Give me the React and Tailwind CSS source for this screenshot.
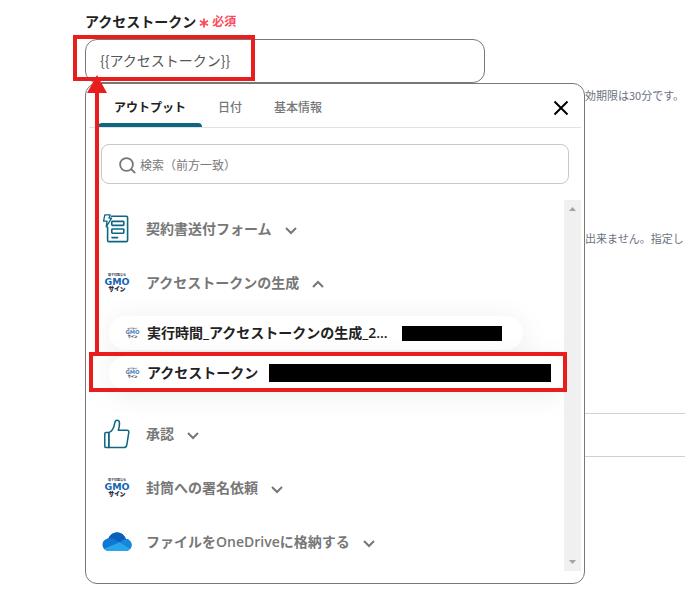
import React, { useState } from "react";

const FormIcon = () => (
  <svg viewBox="0 0 30 30" className="w-[30px] h-[30px]" fill="none" stroke="#0d6783" strokeWidth="1.6">
    <path d="M9.600 2.200h14.600c.9 0 1.400.5 1.400 1.400v22.600c0 .9-.5 1.400-1.400 1.400H7c-.9 0-1.400-.5-1.400-1.400V13" strokeLinecap="round" />
    <rect x="9.800" y="7.400" width="12" height="4" rx=".6" />
    <rect x="9.800" y="15" width="12" height="4.200" rx=".6" />
    <path d="M10 23.600h5.600" strokeLinecap="round" />
    <path d="M2.800.8h5.400L7 4.200h2.600L4.200 12.800 5 7.200H1.600z" strokeWidth="1.300" strokeLinejoin="round" fill="#fff" />
  </svg>
);

const ThumbIcon = () => (
  <svg viewBox="0 0 30 30" className="w-[30px] h-[30px]" fill="none" stroke="#0d6783" strokeWidth="1.5" strokeLinejoin="round">
    <path d="M6.800 13.400H4c-.8 0-1.200.4-1.200 1.200v12.800c0 .8.400 1.200 1.200 1.200h2.800z" />
    <path d="M6.800 13.600c3.200-1.200 5.200-5 6-9.800.3-1.800 1-2.600 2.200-2.600 1.600 0 2.500 1.200 2.500 3.200 0 2.200-.5 4.600-1.200 6.800H25c1.300 0 2 .9 1.800 2.100l-2 12.600c-.2 1.700-1.200 2.700-2.800 2.700H6.800z" />
  </svg>
);

const GmoIcon = ({ className }) => (
  <svg viewBox="0 0 300 200" className={className}>
    <text x="150" y="34" textAnchor="middle" fontSize="30" fontWeight="700" fill="#2b3242" fontFamily="'Noto Sans CJK JP', sans-serif">
      電子印鑑なら
    </text>
    <text x="150" y="120" textAnchor="middle" fontSize="94" fontWeight="700" fill="#1464b4" fontFamily="'DejaVu Sans', sans-serif">
      GMO
    </text>
    <text x="150" y="184" textAnchor="middle" fontSize="56" fontWeight="900" fill="#1c2335" stroke="#1c2335" strokeWidth="2" fontFamily="'Noto Sans CJK JP', sans-serif">
      サイン
    </text>
  </svg>
);

const OneDriveIcon = () => (
  <svg viewBox="0 0 30 20" className="w-[30px] h-5">
    <clipPath id="cloud">
      <path d="M7.500 19C3.400 19 .5 16.300.5 12.800c0-3.300 2.500-5.900 5.900-6.200C7.900 2.900 11.200.6 15 .6c4.200 0 7.700 2.700 8.900 6.500 3.200.3 5.700 2.800 5.700 5.900 0 3.400-2.700 6-6.200 6z" />
    </clipPath>
    <g clipPath="url(#cloud)">
      <rect width="30" height="20" fill="#0f78d4" />
      <path d="M5 0h22v8l-9 2.600L11 6.400 5 6.800z" fill="#0a61b9" />
      <path d="M17.500 10.600 24 6l7 2v9z" fill="#1488dc" />
      <path d="M1.500 17 17.500 10.300 29 17v3H1z" fill="#28a5ea" />
    </g>
  </svg>
);

const Chevron = ({ open }) => (
  <svg viewBox="0 0 12 12" className={open ? "w-3 h-3 mt-1 rotate-180" : "w-3 h-3 mt-[2px]"} fill="none" stroke="#777" strokeWidth="2">
    <path d="M1 4l5 5 5-5" />
  </svg>
);

const tabs = ["アウトプット", "日付", "基本情報"];

const outputs = [
  { name: "契約書送付フォーム", icon: <FormIcon /> },
  {
    name: "アクセストークンの生成",
    icon: <GmoIcon className="w-[30px] h-5" />,
    children: [
      { name: "実行時間_アクセストークンの生成_2...", text: "w-[241px]", pill: "pr-[21px] gap-[14px]", value: "w-[100px] h-[15px]" },
      { name: "アクセストークン", text: "", pill: "pr-[14px] gap-[11px]", value: "w-[282px] h-[18px]" },
    ],
  },
  { name: "承認", icon: <ThumbIcon /> },
  { name: "封筒への署名依頼", icon: <GmoIcon className="w-[30px] h-5" /> },
  { name: "ファイルをOneDriveに格納する", icon: <OneDriveIcon /> },
];

const OutputItem = ({ item }) => (
  <li>
    <button type="button" className="flex items-center h-[54px] pl-[13px] text-sm font-semibold text-[#777]">
      {item.icon}
      <span className="ml-[14px] mr-[13px]">{item.name}</span>
      <Chevron open={!!item.children} />
    </button>
    {item.children && (
      <ul className="flex flex-col items-start gap-[6px] pt-[6px] pb-[17px] pl-5">
        {item.children.map((child) => (
          <li key={child.name}>
            <button
              type="button"
              className={`flex items-center h-[34px] pl-[15px] rounded-full bg-white text-sm font-semibold text-[#222] shadow-[0_4px_30px_rgba(0,0,0,0.08)] ${child.pill}`}
            >
              <span className="flex items-center gap-[6px]">
                <GmoIcon className="w-[17px] h-3 opacity-80" />
                <span className={`whitespace-nowrap text-left ${child.text}`}>{child.name}</span>
              </span>
              <span className={`bg-black ${child.value}`} />
            </button>
          </li>
        ))}
      </ul>
    )}
  </li>
);

const OutputPicker = () => {
  const [active, setActive] = useState(tabs[0]);

  return (
    <div className="absolute top-full left-0 z-10 w-[500px] p-[3px] pb-3 bg-white border border-[#777] rounded-xl">
      {/* Tabs */}
      <div className="flex items-center justify-between h-[41px] pl-[9px] pr-3 border-b border-[#e2e2e2]">
        <div className="flex h-10 text-xs">
          {tabs.map((tab) => (
            <button
              key={tab}
              type="button"
              onClick={() => setActive(tab)}
              className={`relative px-4 ${active === tab ? "font-bold text-[#222]" : "font-medium text-[#777]"}`}
            >
              {tab}
              {active === tab && <span className="absolute left-0 bottom-0 w-full h-1 bg-[#0d6783] rounded-t-sm" />}
            </button>
          ))}
        </div>
        <button type="button" aria-label="閉じる" className="pt-[2px]">
          <svg viewBox="0 0 16 16" className="w-4 h-4" stroke="#000" strokeWidth="2">
            <path d="M1.500 1.500l13 13M14.500 1.500l-13 13" />
          </svg>
        </button>
      </div>

      {/* Search */}
      <label className="flex items-center gap-1 h-10 mt-4 mx-3 pt-[2px] pl-[17px] border border-[#c8c8c8] rounded-lg">
        <svg viewBox="0 0 17 17" className="w-[17px] h-[17px]" fill="none" stroke="#777" strokeWidth="1.8">
          <circle cx="7.500" cy="7.500" r="6.400" />
          <path d="M12 12l4.200 4.200" />
        </svg>
        <input
          type="text"
          placeholder="検索（前方一致）"
          className="flex-1 text-xs outline-none placeholder:text-[#777]"
        />
      </label>

      {/* Output list */}
      <div className="flex mt-4 font-['Open_Sans','Noto_Sans_CJK_JP',sans-serif]">
        <ul className="flex-1 min-w-0 pt-[2px] pb-[2px] overflow-hidden">
          {outputs.map((item) => (
            <OutputItem key={item.name} item={item} />
          ))}
        </ul>
        <div className="flex flex-col items-center justify-between w-[17px] py-[7px] bg-[#f0f0f0]">
          <svg viewBox="0 0 7 4" className="w-[7px] h-1" fill="#a3a3a3">
            <path d="M0 4l3.500-4L7 4z" />
          </svg>
          <svg viewBox="0 0 7 4" className="w-[7px] h-1" fill="#a3a3a3">
            <path d="M0 0l3.500 4L7 0z" />
          </svg>
        </div>
      </div>
    </div>
  );
};

const App = () => {
  return (
    <div className="relative min-h-screen pt-[11px] pl-[85px] overflow-hidden bg-white font-['Noto_Sans_CJK_JP',sans-serif]">
      <div className="flex items-center gap-[2px] h-5 mb-2">
        <label htmlFor="token" className="text-sm font-bold text-[#222]">
          アクセストークン
        </label>
        <span className="flex items-center gap-[2px] text-xs font-bold text-[#fb4b5c]">
          <svg viewBox="0 0 12 12" className="w-3 h-3 mt-1" stroke="currentColor" strokeWidth="1.8">
            <path d="M6 1.500v9M2 3.800l8 4.400M10 3.800L2 8.200" />
          </svg>
          <span>必須</span>
        </span>
      </div>

      <div className="relative">
        <input
          id="token"
          type="text"
          defaultValue="{{アクセストークン}}"
          className="block w-[400px] h-11 px-[14px] pb-[2px] border border-[#777] rounded-xl text-sm text-[#555] outline-none"
        />
        <OutputPicker />
      </div>

      {/* Form behind the picker */}
      <div className="pl-[500px] text-[11px] leading-4 text-[#6b7280] whitespace-nowrap">
        <p className="mt-1">効期限は30分です。</p>
        <p className="mt-[127px]">出来ません。指定し</p>
      </div>
      <input type="text" aria-label="指定" className="block w-full h-11 mt-[167px] border-y border-[#cfd1d6]" />

      {/* Annotations */}
      <div className="absolute z-20 left-[73px] top-[35px] w-[182px] h-[46px] border-4 border-[#e81e1e]" />
      <div className="absolute z-20 left-[89px] top-[352px] w-[478px] h-10 border-4 border-[#e81e1e]" />
      <svg viewBox="0 0 20 280" className="absolute z-20 left-[87px] top-[75px] w-5 h-[280px]" fill="#e81e1e">
        <path d="M10 0l10 18h-8v262H8V18H0z" />
      </svg>
    </div>
  );
};

export default App;
